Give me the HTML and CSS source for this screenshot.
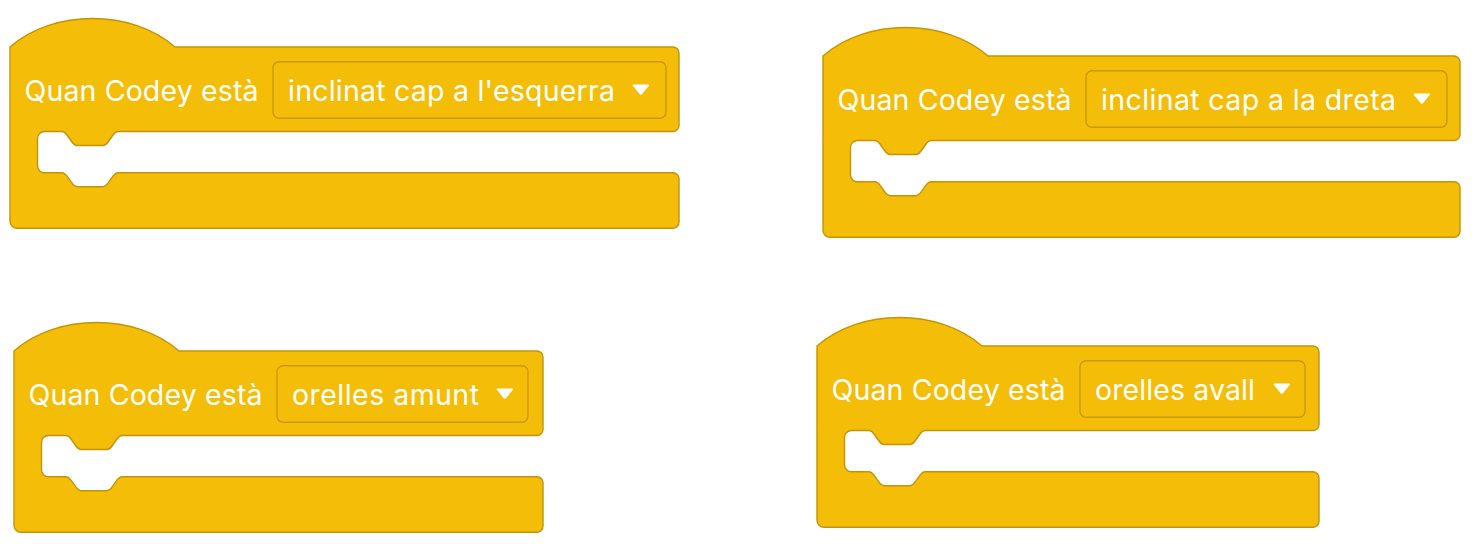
FILE: index.html
```html
<!DOCTYPE html>
<html lang="ca">
<head>
<meta charset="utf-8">
<title>Codey blocks</title>
<link rel="stylesheet" href="styles.css">
</head>
<body>
<div class="ws">
  <svg class="blk b1" width="671" height="214" viewBox="-1 -31 671 214">
    <path class="shape" d="M0,0 C43,-38 122,-38 165,0 H663 A6,6 0 0 1 669,6 V78.5 A6,6 0 0 1 663,84.5 H108 c-2.5,0 -3.75,1.75 -5,3.5 l-5,7 c-1.25,1.75 -2.5,3.5 -5,3.5 h-26 c-2.5,0 -3.75,-1.75 -5,-3.5 l-5,-7 c-1.25,-1.75 -2.5,-3.5 -5,-3.5 H34.5 A7,7 0 0 0 27.5,91.5 V118.7 A7,7 0 0 0 34.5,125.7 H52 c2.5,0 3.75,1.75 5,3.5 l5,7 c1.25,1.75 2.5,3.5 5,3.5 h26 c2.5,0 3.75,-1.75 5,-3.5 l5,-7 c1.25,-1.75 2.5,-3.5 5,-3.5 H663 A6,6 0 0 1 669,131.7 V175.3 A6,6 0 0 1 663,181.3 H7 A7,7 0 0 1 0,174.3 Z"/>
    <text class="lbl" x="14.5" y="53.7" textLength="234" lengthAdjust="spacing">Quan Codey està</text>
    <rect class="dd" x="263" y="14.7" width="393" height="56.6" rx="6"/>
    <text class="lbl" x="278" y="53.7" textLength="327" lengthAdjust="spacing">inclinat cap a l'esquerra</text>
    <path class="arrow" transform="translate(622,37.5)" d="M1.5,0 H16 Q17.8,0 16.6,1.5 L10.1,9.6 Q8.8,11.2 7.5,9.6 L1,1.5 Q-0.2,0 1.5,0 Z"/>
  </svg>

  <svg class="blk b2" width="639" height="214" viewBox="-1 -31 639 214">
    <path class="shape" d="M0,0 C43,-38 122,-38 165,0 H631 A6,6 0 0 1 637,6 V78.5 A6,6 0 0 1 631,84.5 H108 c-2.5,0 -3.75,1.75 -5,3.5 l-5,7 c-1.25,1.75 -2.5,3.5 -5,3.5 h-26 c-2.5,0 -3.75,-1.75 -5,-3.5 l-5,-7 c-1.25,-1.75 -2.5,-3.5 -5,-3.5 H34.5 A7,7 0 0 0 27.5,91.5 V118.7 A7,7 0 0 0 34.5,125.7 H52 c2.5,0 3.75,1.75 5,3.5 l5,7 c1.25,1.75 2.5,3.5 5,3.5 h26 c2.5,0 3.75,-1.75 5,-3.5 l5,-7 c1.25,-1.75 2.5,-3.5 5,-3.5 H631 A6,6 0 0 1 637,131.7 V175.3 A6,6 0 0 1 631,181.3 H7 A7,7 0 0 1 0,174.3 Z"/>
    <text class="lbl" x="14.5" y="53.7" textLength="234" lengthAdjust="spacing">Quan Codey està</text>
    <rect class="dd" x="263" y="14.7" width="361" height="56.6" rx="6"/>
    <text class="lbl" x="278" y="53.7" textLength="295" lengthAdjust="spacing">inclinat cap a la dreta</text>
    <path class="arrow" transform="translate(590,37.5)" d="M1.5,0 H16 Q17.8,0 16.6,1.5 L10.1,9.6 Q8.8,11.2 7.5,9.6 L1,1.5 Q-0.2,0 1.5,0 Z"/>
  </svg>

  <svg class="blk b3" width="531" height="214" viewBox="-1 -31 531 214">
    <path class="shape" d="M0,0 C43,-38 122,-38 165,0 H523 A6,6 0 0 1 529,6 V78.5 A6,6 0 0 1 523,84.5 H108 c-2.5,0 -3.75,1.75 -5,3.5 l-5,7 c-1.25,1.75 -2.5,3.5 -5,3.5 h-26 c-2.5,0 -3.75,-1.75 -5,-3.5 l-5,-7 c-1.25,-1.75 -2.5,-3.5 -5,-3.5 H34.5 A7,7 0 0 0 27.5,91.5 V118.7 A7,7 0 0 0 34.5,125.7 H52 c2.5,0 3.75,1.75 5,3.5 l5,7 c1.25,1.75 2.5,3.5 5,3.5 h26 c2.5,0 3.75,-1.75 5,-3.5 l5,-7 c1.25,-1.75 2.5,-3.5 5,-3.5 H523 A6,6 0 0 1 529,131.7 V175.3 A6,6 0 0 1 523,181.3 H7 A7,7 0 0 1 0,174.3 Z"/>
    <text class="lbl" x="14.5" y="53.7" textLength="234" lengthAdjust="spacing">Quan Codey està</text>
    <rect class="dd" x="263" y="14.7" width="251" height="56.6" rx="6"/>
    <text class="lbl" x="278" y="53.7" textLength="187" lengthAdjust="spacing">orelles amunt</text>
    <path class="arrow" transform="translate(482,37.5)" d="M1.5,0 H16 Q17.8,0 16.6,1.5 L10.1,9.6 Q8.8,11.2 7.5,9.6 L1,1.5 Q-0.2,0 1.5,0 Z"/>
  </svg>

  <svg class="blk b4" width="504" height="214" viewBox="-1 -31 504 214">
    <path class="shape" d="M0,0 C43,-38 122,-38 165,0 H496 A6,6 0 0 1 502,6 V78.5 A6,6 0 0 1 496,84.5 H108 c-2.5,0 -3.75,1.75 -5,3.5 l-5,7 c-1.25,1.75 -2.5,3.5 -5,3.5 h-26 c-2.5,0 -3.75,-1.75 -5,-3.5 l-5,-7 c-1.25,-1.75 -2.5,-3.5 -5,-3.5 H34.5 A7,7 0 0 0 27.5,91.5 V118.7 A7,7 0 0 0 34.5,125.7 H52 c2.5,0 3.75,1.75 5,3.5 l5,7 c1.25,1.75 2.5,3.5 5,3.5 h26 c2.5,0 3.75,-1.75 5,-3.5 l5,-7 c1.25,-1.75 2.5,-3.5 5,-3.5 H496 A6,6 0 0 1 502,131.7 V175.3 A6,6 0 0 1 496,181.3 H7 A7,7 0 0 1 0,174.3 Z"/>
    <text class="lbl" x="14.5" y="53.7" textLength="234" lengthAdjust="spacing">Quan Codey està</text>
    <rect class="dd" x="263" y="14.7" width="225" height="56.6" rx="6"/>
    <text class="lbl" x="278" y="53.7" textLength="160" lengthAdjust="spacing">orelles avall</text>
    <path class="arrow" transform="translate(456,37.5)" d="M1.5,0 H16 Q17.8,0 16.6,1.5 L10.1,9.6 Q8.8,11.2 7.5,9.6 L1,1.5 Q-0.2,0 1.5,0 Z"/>
  </svg>
</div>
</body>
</html>
```

FILE: styles.css
```css
html, body {
  margin: 0;
  padding: 0;
  background: #ffffff;
}

.ws {
  position: relative;
  width: 1477px;
  height: 544px;
  overflow: hidden;
  background: #ffffff;
}

.blk {
  position: absolute;
  display: block;
  overflow: visible;
}

.b1 { left: 9px;   top: 16px; }
.b2 { left: 822px; top: 25px; }
.b3 { left: 13px;  top: 320px; }
.b4 { left: 816px; top: 315px; }

.shape {
  fill: #f4be08;
  stroke: #c29509;
  stroke-width: 1.4;
}

.dd {
  fill: #f4be08;
  stroke: #c89a0b;
  stroke-width: 1.4;
}

.lbl {
  fill: #ffffff;
  font-family: "Inter", "Noto Sans", sans-serif;
  font-size: 28.5px;
  font-weight: 400;
}

.arrow {
  fill: #ffffff;
}
```
